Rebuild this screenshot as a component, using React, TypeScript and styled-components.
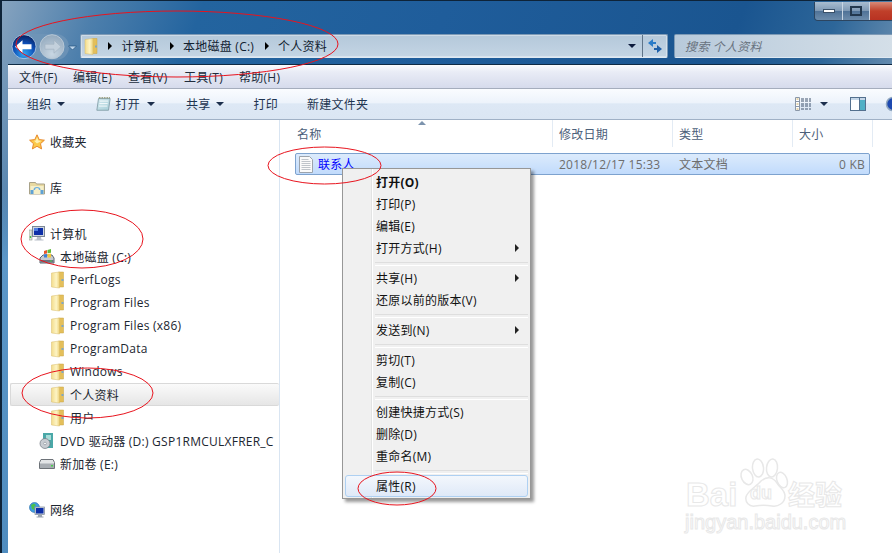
import React from 'react'
import styled, { createGlobalStyle } from 'styled-components'

const UI_FONT = '"Open Sans", "Noto Sans CJK SC", sans-serif'

const Global = createGlobalStyle`
  html, body { margin: 0; padding: 0; background: #fff; }
  * { box-sizing: border-box; }
`

const Page = styled.div`
  position: relative;
  width: 892px;
  height: 553px;
  overflow: hidden;
  display: flex;
  flex-direction: column;
  font-family: ${UI_FONT};
  font-size: 12px;
  letter-spacing: 0.25px;
  color: #1c2b3a;
  border-top: 1px solid #0e2338;
  border-left: 2px solid #0e2338;
  background:
    linear-gradient(180deg, transparent 0, transparent 190px, #5c97c8 260px, #4f8cbf 553px) left / 6px 100% no-repeat,
    linear-gradient(110deg, #86a3bf 0, #4d7fac 90px, #23649f 190px, #1f5d9b 420px, #1a5590 700px, #2d6699 790px, #7e9cb8 892px);
`

const Glass = styled.header`
  height: 63px;
  flex: none;
  position: relative;
  padding-left: 6px;
`

const WindowControls = styled.div`
  position: absolute;
  top: 1px;
  right: -2px;
  display: flex;
  height: 19px;
  border: 1px solid #2c4560;
  border-top: 0;
  border-radius: 0 0 4px 4px;
  overflow: hidden;
`

const CtrlButton = styled.div<{ $w: number; $close?: boolean }>`
  width: ${(p) => p.$w}px;
  display: flex;
  align-items: center;
  justify-content: center;
  border-right: 1px solid #c8d6e4;
  background: ${(p) =>
    p.$close
      ? 'linear-gradient(180deg, #d88a78 0, #c0402a 50%, #b83222 100%)'
      : 'linear-gradient(180deg, #a9bdd1 0, #7d98b4 50%, #4f7297 51%, #6d8cab 100%)'};
`

const NavRow = styled.div`
  display: flex;
  align-items: center;
  height: 24px;
  margin-top: 33px;
`

const NavGroup = styled.div`
  width: 72px;
  flex: none;
  height: 30px;
`

const AddressBar = styled.div`
  width: 588px;
  height: 24px;
  flex: none;
  display: flex;
  align-items: center;
  background: linear-gradient(180deg, #b4c8da, #c4d5e4);
  border: 1px solid #7d9ab6;
  border-bottom-color: #dfe9f2;
  border-radius: 2px;
  box-shadow: inset 0 0 0 1px rgba(255, 255, 255, 0.35);
`

const Crumbs = styled.div`
  flex: 1;
  display: flex;
  align-items: center;
  white-space: nowrap;
  color: #10202f;
  padding-left: 3px;
`

const Crumb = styled.span<{ $w: number }>`
  width: ${(p) => p.$w}px;
`

const CrumbArrow = styled.span`
  width: 0;
  height: 0;
  margin: 0 9.5px 0 10px;
  border-left: 4px solid #000;
  border-top: 4px solid transparent;
  border-bottom: 4px solid transparent;
`

const DropArrow = styled.span<{ $color?: string; $ml?: number }>`
  display: inline-block;
  width: 0;
  height: 0;
  margin-left: ${(p) => p.$ml ?? 0}px;
  border-top: 4px solid ${(p) => p.$color ?? '#1c2f4d'};
  border-left: 4px solid transparent;
  border-right: 4px solid transparent;
`

const AddressDrop = styled.div`
  width: 24px;
  padding-left: 4px;
  display: flex;
  justify-content: center;
`

const Refresh = styled.div`
  width: 25px;
  height: 100%;
  display: flex;
  align-items: center;
  justify-content: center;
  border-left: 1px solid #5f7488;
`

const SearchBox = styled.div`
  flex: 1;
  margin-left: 6px;
  margin-right: -2px;
  height: 24px;
  padding-left: 10px;
  display: flex;
  align-items: center;
  font-style: italic;
  color: #68727e;
  background: linear-gradient(90deg, #b8cadb, #d4dfe8);
  border: 1px solid #7d9ab6;
  border-bottom-color: #dfe9f2;
  border-radius: 2px;
`

const Explorer = styled.div`
  flex: 1;
  min-height: 0;
  margin-left: 6px;
  display: flex;
  flex-direction: column;
  background: #fff;
  border-top: 1px solid #0f2a44;
`

const MenuBar = styled.nav`
  height: 24px;
  flex: none;
  display: flex;
  align-items: center;
  padding-left: 11px;
  color: #202c3c;
  background: linear-gradient(180deg, #fbfcfe 0, #e9ecf6 30%, #d6dbec 100%);
  border-bottom: 1px solid #a5adbd;
`

const MenuLabel = styled.span<{ $w: number }>`
  width: ${(p) => p.$w}px;
`

const CommandBar = styled.div`
  height: 31px;
  flex: none;
  display: flex;
  align-items: center;
  color: #1e3450;
  background: linear-gradient(180deg, #fafcff 0, #edf3fb 45%, #dde8f5 50%, #dbe6f3 100%);
  border-bottom: 1px solid #a0b1c6;
`

const Command = styled.div<{ $left: number }>`
  display: flex;
  align-items: center;
  gap: 5px;
  margin-left: ${(p) => p.$left}px;
`

const CommandTools = styled.div`
  margin-left: auto;
  display: flex;
  align-items: center;
  margin-right: -7px;
`

const Main = styled.div`
  flex: 1;
  min-height: 0;
  display: flex;
`

const Sidebar = styled.aside`
  width: 272px;
  flex: none;
  padding-top: 10px;
  overflow: hidden;
  border-right: 1px solid #d9e5f2;
  color: #1c2630;
`

const TreeRow = styled.div<{ $indent: number; $gapAfter?: boolean; $selected?: boolean }>`
  height: 23px;
  display: flex;
  align-items: center;
  gap: 5px;
  white-space: nowrap;
  padding-left: ${(p) => p.$indent}px;
  margin-bottom: ${(p) => (p.$gapAfter ? 23 : 0)}px;
  ${(p) =>
    p.$selected &&
    `margin-left: 2px;
     padding-left: ${p.$indent - 3}px;
     border: 1px solid #d9d9d9;
     border-right: 0;
     border-radius: 2px;
     background: linear-gradient(180deg, #fafafa, #e6e6e6);`}
`

const FilePane = styled.section`
  flex: 1;
  min-width: 0;
`

const HeaderRow = styled.div`
  height: 27px;
  display: flex;
  color: #4c607a;
  position: relative;
`

const HeaderCell = styled.div<{ $w: number; $first?: boolean }>`
  width: ${(p) => p.$w}px;
  flex: none;
  padding-left: ${(p) => (p.$first ? 17 : 6)}px;
  display: flex;
  align-items: center;
  border-right: 1px solid #e3ebf4;
`

const SortMark = styled.span`
  position: absolute;
  left: 138px;
  top: 1px;
  width: 0;
  height: 0;
  border-bottom: 4px solid #7c93ad;
  border-left: 4px solid transparent;
  border-right: 4px solid transparent;
`

const FileRow = styled.div`
  margin: 6px 0 0 15px;
  width: 575px;
  height: 22px;
  display: flex;
  align-items: center;
  color: #6d6d6d;
  border: 1px solid #7da2ce;
  border-radius: 2px;
  background: linear-gradient(180deg, #dcebfc, #c1dbfc);
`

const FileName = styled.div`
  width: 263px;
  flex: none;
  display: flex;
  align-items: center;
  gap: 5px;
  padding-left: 3px;
  color: #0000ff;
`

const FileCell = styled.div<{ $w: number; $right?: boolean }>`
  width: ${(p) => p.$w}px;
  flex: none;
  text-align: ${(p) => (p.$right ? 'right' : 'left')};
`

const ContextMenu = styled.div`
  position: absolute;
  left: 340px;
  top: 167px;
  width: 189px;
  height: 331px;
  padding: 2px 2px 1px 2px;
  color: #111;
  border: 1px solid #979797;
  background:
    linear-gradient(90deg, transparent 28px, #e2e3e3 28px, #e2e3e3 29px, #fff 29px, #fff 30px, transparent 30px),
    #f0f0f0;
  box-shadow: 3px 3px 3px rgba(0, 0, 0, 0.4);
`

const MenuItem = styled.div<{ $bold?: boolean; $hover?: boolean }>`
  height: 22px;
  display: flex;
  align-items: center;
  justify-content: space-between;
  padding: 0 9px 0 31px;
  font-weight: ${(p) => (p.$bold ? 700 : 400)};
  border-radius: 3px;
  ${(p) =>
    p.$hover &&
    `border: 1px solid #aed0f2;
     padding-left: 30px;
     background: linear-gradient(180deg, #f3f7fc, #dfe9f8);`}
`

const SubArrow = styled.span`
  width: 0;
  height: 0;
  border-left: 4px solid #222;
  border-top: 4px solid transparent;
  border-bottom: 4px solid transparent;
`

const MenuSep = styled.div`
  height: 8px;
  margin-left: 30px;
  padding-top: 2px;
  display: flex;
  align-items: center;
  &::before {
    content: '';
    flex: 1;
    height: 2px;
    border-top: 1px solid #dedede;
    border-bottom: 1px solid #fff;
  }
`

const Annotations = styled.svg`
  position: absolute;
  left: -2px;
  top: -1px;
  width: 892px;
  height: 553px;
  pointer-events: none;
`

const Watermark = styled.div`
  position: absolute;
  left: 680px;
  top: 450px;
  width: 170px;
  height: 90px;
  pointer-events: none;
  font-family: "Liberation Sans", "Noto Sans CJK SC", sans-serif;
  letter-spacing: 0;
  color: #fff;
  -webkit-text-stroke: 1px #e8e8e8;
`

const WmBai = styled.span`
  position: absolute;
  left: 4px;
  top: 24px;
  font-size: 33px;
  font-weight: 700;
  line-height: 40px;
`

const WmDu = styled.span`
  position: absolute;
  left: 68px;
  top: 31px;
  font-size: 18px;
  font-weight: 700;
  line-height: 22px;
`

const WmJing = styled.span`
  position: absolute;
  left: 106px;
  top: 28px;
  font-size: 27px;
  font-weight: 700;
  line-height: 34px;
  white-space: nowrap;
`

const WmSite = styled.span`
  position: absolute;
  left: 3px;
  top: 58px;
  font-size: 20px;
  line-height: 26px;
  white-space: nowrap;
`

const FolderIcon = ({ w = 15, h = 18 }: { w?: number; h?: number }) => (
  <svg width={w} height={h} viewBox="0 0 14 18">
    <defs>
      <linearGradient id="fold" x1="0" y1="0" x2="1" y2="0">
        <stop offset="0" stopColor="#f3dc8c" />
        <stop offset="0.6" stopColor="#fdf4c4" />
        <stop offset="1" stopColor="#eed27c" />
      </linearGradient>
    </defs>
    <path d="M8 1h5v15H8z" fill="#e4bf5a" stroke="#c9a545" strokeWidth="0.5" />
    <path d="M1 2l8-1v16l-8-1z" fill="url(#fold)" stroke="#d9bd6a" strokeWidth="0.5" />
    <rect x="11" y="8" width="2" height="2" fill="#7da6c6" />
  </svg>
)

const StarIcon = () => (
  <svg width="16" height="16" viewBox="0 0 16 16">
    <path d="M8 .8l2.2 4.8 5.2.6-3.9 3.5 1.1 5.2L8 12.3l-4.6 2.6 1.1-5.2L.6 6.2l5.2-.6z" fill="#fbc94a" stroke="#e8892c" />
    <path d="M8 3l1.4 3.4 3.2.4L8 9.5 5 6.8l1.8-.4z" fill="#fff0b0" />
  </svg>
)

const LibraryIcon = () => (
  <svg width="16" height="16" viewBox="0 0 16 16">
    <path d="M.5 2.5h6l1 1.5h8v10h-15z" fill="#e8d9a0" stroke="#a9a288" />
    <path d="M1.5 6h13v8h-13z" fill="#f6efc9" />
    <path d="M1.5 10h3v4h-3zM11.5 10h3v4h-3z" fill="#5fa2d6" />
    <path d="M4.5 10a3.5 3 0 0 1 7 0H10a2 2 0 0 0-4 0z" fill="#6cb0e0" />
  </svg>
)

const ComputerIcon = () => (
  <svg width="16" height="16" viewBox="0 0 16 16">
    <rect x="0" y="4" width="3" height="10" fill="#dde3dc" stroke="#8c9890" strokeWidth="0.6" />
    <rect x="0.8" y="10" width="1.4" height="2" fill="#49c24a" />
    <rect x="3.5" y="0.5" width="12" height="10" fill="#cfd6e0" stroke="#7d8896" />
    <rect x="5" y="2" width="9" height="7" fill="#0d2fa8" />
    <path d="M5 2h4v3H5z" fill="#4f7de0" />
    <path d="M8 11h4l.5 2.5h2v1H5.500v-1h2z" fill="#b9c0ca" />
  </svg>
)

const SystemDriveIcon = () => (
  <svg width="16" height="17" viewBox="0 0 16 17">
    <path d="M1 10l3-3h9l2 3v5H1z" fill="#c5c9ce" stroke="#5d6570" />
    <rect x="1.500" y="12" width="13" height="2.500" fill="#6c7480" />
    <rect x="11" y="12.500" width="2" height="1" fill="#49d24a" />
    <path d="M5 3l3-1v3.500l-3 .5z" fill="#e8562a" />
    <path d="M8.500 2l3.500-1v3.700l-3.500.6z" fill="#5fb83a" />
    <path d="M5 6.500l3-.5v3.500H5z" fill="#3a7fd8" />
    <path d="M8.500 6l3.500-.5V9.500H8.500z" fill="#f5c73a" />
  </svg>
)

const DvdIcon = () => (
  <svg width="16" height="16" viewBox="0 0 14 16">
    <path d="M3 0h10v15H3z" fill="#4aa8a8" />
    <path d="M6 2h5v5H6z" fill="#a9dcd8" />
    <circle cx="5" cy="10.500" r="5" fill="#c8ccd2" stroke="#6f7680" strokeWidth="0.7" />
    <circle cx="5" cy="10.500" r="1.300" fill="#fff" stroke="#6f7680" strokeWidth="0.5" />
  </svg>
)

const DriveIcon = () => (
  <svg width="16" height="10" viewBox="0 0 16 10">
    <path d="M2 .5h12l1.500 3v6H.5v-6z" fill="#e2e4e6" stroke="#6d7278" />
    <rect x="1" y="4.500" width="14" height="4.500" fill="#a8adb3" />
    <rect x="12" y="6" width="2" height="1.500" fill="#49d24a" />
  </svg>
)

const NetworkIcon = () => (
  <svg width="16" height="16" viewBox="0 0 16 16">
    <circle cx="5.500" cy="5.500" r="5" fill="#3f9fe0" stroke="#2468a8" strokeWidth="0.6" />
    <path d="M2 3l3-1.500 2 1.500-2 2 1 3-3-1z" fill="#4cc04a" />
    <rect x="6" y="5" width="9.500" height="7.500" fill="#cfd6e0" stroke="#7d8896" strokeWidth="0.7" />
    <rect x="7" y="6" width="7.500" height="5.500" fill="#0d2fa8" />
    <path d="M9 13h4v1.500h1.500v1h-7v-1H9z" fill="#9aa4b0" />
  </svg>
)

const DocumentIcon = () => (
  <svg width="14" height="17" viewBox="0 0 14 17">
    <path d="M.5.5h10l3 3v13H.5z" fill="#fafafa" stroke="#9ca3ab" />
    <path d="M2.500 3.500h7M2.500 5.500h9M2.500 7.500h9M2.500 9.500h9M2.500 11.500h9M2.500 13.500h9" stroke="#bfc4ca" />
  </svg>
)

const NotepadIcon = () => (
  <svg width="15" height="16" viewBox="0 0 18 17">
    <defs>
      <linearGradient id="pad" x1="0" y1="0" x2="1" y2="1">
        <stop offset="0" stopColor="#d3eaf0" />
        <stop offset="1" stopColor="#a8cfd8" />
      </linearGradient>
    </defs>
    <path d="M3 2h14l-2 14H1z" fill="url(#pad)" stroke="#7f9aa3" />
    <path d="M3.500 1h13" stroke="#8a8f68" strokeDasharray="1 1" strokeWidth="2" />
    <path d="M4.500 5h10M4 8h10M3.500 11h10" stroke="#fff" />
  </svg>
)

const BackButton = () => (
  <svg width="72" height="30" viewBox="0 0 72 30">
    <defs>
      <radialGradient id="back" cx="0.5" cy="0.8" r="0.8">
        <stop offset="0" stopColor="#34a8f2" />
        <stop offset="0.55" stopColor="#0d4fb8" />
        <stop offset="1" stopColor="#06205c" />
      </radialGradient>
      <radialGradient id="fwd" cx="0.5" cy="0.8" r="0.8">
        <stop offset="0" stopColor="#c9d7e3" />
        <stop offset="1" stopColor="#93a9bd" />
      </radialGradient>
    </defs>
    <rect x="3" y="3" width="58" height="26" rx="13" fill="#6f95b8" opacity="0.8" />
    <circle cx="16" cy="15.700" r="12" fill="url(#back)" stroke="#b8d0e8" strokeWidth="0.8" />
    <path d="M7 15.700l7.500-6.500v4h9v5h-9v4z" fill="#fff" />
    <circle cx="44" cy="15.700" r="12" fill="url(#fwd)" stroke="#b8c8d6" />
    <path d="M53 15.700l-7-6.500v4h-9v5h9v4z" fill="#c3d0dc" stroke="#9fb0c0" strokeWidth="0.6" />
    <path d="M60.500 15h8l-4 4z" fill="#bcd4ea" stroke="#23537f" strokeWidth="0.7" />
  </svg>
)

const RefreshIcon = () => (
  <svg width="16" height="16" viewBox="0 0 16 16">
    <path d="M6 0v3h3v2H6v3L1 4z" fill="#2a7cc8" transform="translate(0 1)" />
    <path d="M10 16v-3H7v-2h3V8l5 4z" fill="#1d5fa8" transform="translate(0 -1)" />
  </svg>
)

const ViewIcon = () => (
  <svg width="16" height="14" viewBox="0 0 16 14">
    <path d="M.5.5h4v13h-4z" fill="#fff" stroke="#8a97a8" />
    <path d="M1 4.500h3M1 9.500h3" stroke="#8a97a8" />
    <path d="M1.500 2h2M1.500 7h2M1.500 12h2" stroke="#c9a85a" />
    <path d="M6 2h10M6 4h10M6 7h10M6 9h10M6 12h10" stroke="#41556e" strokeDasharray="3 1" />
  </svg>
)

const PaneIcon = () => (
  <svg width="16" height="14" viewBox="0 0 16 14">
    <rect x="0.500" y="0.500" width="15" height="13" fill="#fff" stroke="#54708e" />
    <rect x="1" y="1" width="14" height="2" fill="#c4d6e8" />
    <rect x="10" y="3" width="5" height="10" fill="#4fb0c6" />
    <path d="M9.500 1v12" stroke="#54708e" />
  </svg>
)

const HelpIcon = () => (
  <svg width="14" height="16" viewBox="0 0 14 16">
    <circle cx="8" cy="8" r="6.500" fill="#1d49b0" stroke="#8fa6bf" strokeWidth="1.500" />
  </svg>
)

const PawSvg = styled.svg`
  position: absolute;
  left: 50px;
  top: 2px;
`

const Paw = () => (
  <PawSvg width="60" height="60" viewBox="0 0 60 60">
    <g fill="#fff" stroke="#e8e8e8" strokeWidth="1.500">
      <ellipse cx="15" cy="24" rx="5.500" ry="8" transform="rotate(-25 15 24)" />
      <ellipse cx="26" cy="15" rx="5.500" ry="9" transform="rotate(-6 26 15)" />
      <ellipse cx="40" cy="15" rx="5.500" ry="9" transform="rotate(6 40 15)" />
      <ellipse cx="50" cy="27" rx="5" ry="8" transform="rotate(-22 50 27)" />
      <path d="M29 28c6-5 12-4 16 2 3 5 8 7 8 13 0 7-7 11-13 10-6-1-11-1-17 0-6 1-10-4-9-9 1-6 10-10 15-16z" />
    </g>
  </PawSvg>
)

const ELLIPSES = [
  { cx: 177, cy: 44, rx: 161, ry: 33 },
  { cx: 324.500, cy: 165.500, rx: 56.500, ry: 18.500 },
  { cx: 82, cy: 239, rx: 61, ry: 29 },
  { cx: 87.500, cy: 393, rx: 65.500, ry: 25 },
  { cx: 397, cy: 488.500, rx: 39, ry: 16.500 },
]

const TREE = [
  { label: '收藏夹', indent: 21, icon: <StarIcon />, gap: true },
  { label: '库', indent: 21, icon: <LibraryIcon />, gap: true },
  { label: '计算机', indent: 21, icon: <ComputerIcon /> },
  { label: '本地磁盘 (C:)', indent: 31, icon: <SystemDriveIcon /> },
  { label: 'PerfLogs', indent: 42, icon: <FolderIcon /> },
  { label: 'Program Files', indent: 42, icon: <FolderIcon /> },
  { label: 'Program Files (x86)', indent: 42, icon: <FolderIcon /> },
  { label: 'ProgramData', indent: 42, icon: <FolderIcon /> },
  { label: 'Windows', indent: 42, icon: <FolderIcon /> },
  { label: '个人资料', indent: 42, icon: <FolderIcon />, selected: true },
  { label: '用户', indent: 42, icon: <FolderIcon /> },
  { label: 'DVD 驱动器 (D:) GSP1RMCULXFRER_C', indent: 31, icon: <DvdIcon /> },
  { label: '新加卷 (E:)', indent: 31, icon: <DriveIcon />, gap: true },
  { label: '网络', indent: 21, icon: <NetworkIcon /> },
]

const MENU: (string | { label: string; bold?: boolean; sub?: boolean; hover?: boolean })[] = [
  { label: '打开(O)', bold: true },
  { label: '打印(P)' },
  { label: '编辑(E)' },
  { label: '打开方式(H)', sub: true },
  '-',
  { label: '共享(H)', sub: true },
  { label: '还原以前的版本(V)' },
  '-',
  { label: '发送到(N)', sub: true },
  '-',
  { label: '剪切(T)' },
  { label: '复制(C)' },
  '-',
  { label: '创建快捷方式(S)' },
  { label: '删除(D)' },
  { label: '重命名(M)' },
  '-',
  { label: '属性(R)', hover: true },
]

function App() {
  return (
    <Page>
      <Global />
      <Glass>
        <WindowControls>
          <CtrlButton $w={28}>
            <svg width="12" height="4"><rect x="0.500" y="0.500" width="11" height="3" fill="#fff" stroke="#3a5068" /></svg>
          </CtrlButton>
          <CtrlButton $w={27}>
            <svg width="12" height="10"><rect x="1" y="1" width="10" height="8" fill="none" stroke="#23384e" strokeWidth="2" /></svg>
          </CtrlButton>
          <CtrlButton $w={23} $close />
        </WindowControls>
        <NavRow>
          <NavGroup><BackButton /></NavGroup>
          <AddressBar>
            <Crumbs>
              <FolderIcon w={14} h={19} />
              <CrumbArrow />
              <Crumb $w={38}>计算机</Crumb>
              <CrumbArrow />
              <Crumb $w={71.5}>本地磁盘 (C:)</Crumb>
              <CrumbArrow />
              <span>个人资料</span>
            </Crumbs>
            <AddressDrop><DropArrow $color="#0c1a3c" /></AddressDrop>
            <Refresh><RefreshIcon /></Refresh>
          </AddressBar>
          <SearchBox>搜索 个人资料</SearchBox>
        </NavRow>
      </Glass>
      <Explorer>
        <MenuBar>
          <MenuLabel $w={54}>文件(F)</MenuLabel>
          <MenuLabel $w={55}>编辑(E)</MenuLabel>
          <MenuLabel $w={56}>查看(V)</MenuLabel>
          <MenuLabel $w={55}>工具(T)</MenuLabel>
          <MenuLabel $w={60}>帮助(H)</MenuLabel>
        </MenuBar>
        <CommandBar>
          <Command $left={19}>组织 <DropArrow /></Command>
          <Command $left={31}><NotepadIcon /> 打开 <DropArrow $ml={2} /></Command>
          <Command $left={31}>共享 <DropArrow /></Command>
          <Command $left={30}>打印</Command>
          <Command $left={29}>新建文件夹</Command>
          <CommandTools>
            <ViewIcon />
            <Command $left={9}><DropArrow /></Command>
            <Command $left={22}><PaneIcon /></Command>
            <Command $left={19}><HelpIcon /></Command>
          </CommandTools>
        </CommandBar>
        <Main>
          <Sidebar>
            {TREE.map((row) => (
              <TreeRow key={row.label} $indent={row.indent} $gapAfter={row.gap} $selected={row.selected}>
                {row.icon}
                <span>{row.label}</span>
              </TreeRow>
            ))}
          </Sidebar>
          <FilePane>
            <HeaderRow>
              <SortMark />
              <HeaderCell $w={273} $first>名称</HeaderCell>
              <HeaderCell $w={120}>修改日期</HeaderCell>
              <HeaderCell $w={120}>类型</HeaderCell>
              <HeaderCell $w={80}>大小</HeaderCell>
            </HeaderRow>
            <FileRow>
              <FileName><DocumentIcon />联系人</FileName>
              <FileCell $w={120}>2018/12/17 15:33</FileCell>
              <FileCell $w={120}>文本文档</FileCell>
              <FileCell $w={66} $right>0 KB</FileCell>
            </FileRow>
          </FilePane>
        </Main>
      </Explorer>

      <ContextMenu>
        {MENU.map((item, i) =>
          typeof item === 'string' ? (
            <MenuSep key={i} />
          ) : (
            <MenuItem key={i} $bold={item.bold} $hover={item.hover}>
              {item.label}
              {item.sub && <SubArrow />}
            </MenuItem>
          ),
        )}
      </ContextMenu>

      <Watermark>
        <Paw />
        <WmBai>Bai</WmBai>
        <WmDu>du</WmDu>
        <WmJing>经验</WmJing>
        <WmSite>jingyan.baidu.com</WmSite>
      </Watermark>

      <Annotations viewBox="0 0 892 553">
        {ELLIPSES.map((e) => (
          <ellipse key={e.cx} cx={e.cx} cy={e.cy} rx={e.rx} ry={e.ry} fill="none" stroke="#e8141e" strokeWidth="1" />
        ))}
      </Annotations>
    </Page>
  )
}

export default App
